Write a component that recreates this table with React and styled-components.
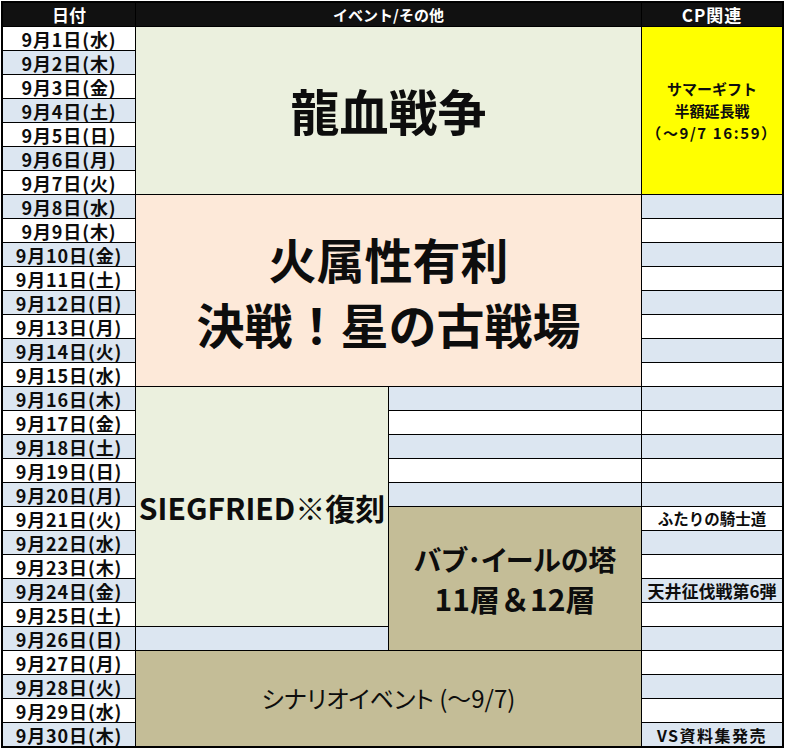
import styled, { createGlobalStyle } from "styled-components"

const GlobalStyle = createGlobalStyle`
    body {
        margin: 0;
        background: #fff;
        font-family: "Noto Sans CJK JP", "Noto Sans", sans-serif;
    }
`;

const WEEK = ["水", "木", "金", "土", "日", "月", "火"];
const days = Array.from({ length: 30 }, (_, i) => ({
    day: i + 1,
    label: `9月${i + 1}日(${WEEK[i % 7]})`,
}));

const rowOf = (day) => day + 1;
const shade = (day) => (day % 2 === 0 ? "#dce6f1" : "#ffffff");

// text in the CP column, with the size each one was squeezed to
const cpNotes = {
    21: { text: "ふたりの騎士道", size: 15.5, ls: 0 },
    24: { text: "天井征伐戦第6弾", size: 17, ls: 0 },
    30: { text: "VS資料集発売", size: 16, ls: 1.5 },
};

const App = () => {
    return <>
        <GlobalStyle />
        <Sheet>
            <Head $col="1">日付</Head>
            <Head $col="2 / 4" $size={15}>イベント/その他</Head>
            <Head $col="4" $ls={1}>CP関連</Head>

            {days.map(d => (
                <DateCell key={d.day} $row={rowOf(d.day)} $bg={shade(d.day)}>{d.label}</DateCell>
            ))}

            <Event $row={`${rowOf(1)} / span 7`} $col="2 / 4" $bg="#ebf0de">
                <Line $size={49}>龍血戦争</Line>
            </Event>
            <CpCell $row={`${rowOf(1)} / span 7`} $bg="#ffff00">
                <CpLine>サマーギフト</CpLine>
                <CpLine>半額延長戦</CpLine>
                <CpLine $ls={1.6}>（～9/7 16:59）</CpLine>
            </CpCell>

            <Event $row={`${rowOf(8)} / span 8`} $col="2 / 4" $bg="#fde9d9">
                <Line $size={48} $lh={65}>火属性有利</Line>
                <Line $size={48} $lh={65}>決戦！星の古戦場</Line>
            </Event>

            <Event $row={`${rowOf(16)} / span 10`} $col="2" $bg="#ebf0de">
                <Line $size={30}>SIEGFRIED※復刻</Line>
            </Event>
            {[16, 17, 18, 19, 20].map(d => (
                <Blank key={d} $row={rowOf(d)} $col="3" $bg={shade(d)} />
            ))}
            <Event $row={`${rowOf(21)} / span 6`} $col="3" $bg="#c4bd97">
                <Line $size={28} $lh={39} $palt>バブ･イールの塔</Line>
                <Line $size={30} $lh={39}>11層＆12層</Line>
            </Event>
            <Blank $row={rowOf(26)} $col="2" $bg={shade(26)} />

            <Event $row={`${rowOf(27)} / span 4`} $col="2 / 4" $bg="#c4bd97">
                <Line $size={24} $light $palt>シナリオイベント (～9/7)</Line>
            </Event>

            {days.filter(d => d.day >= 8).map(d => {
                const note = cpNotes[d.day];
                return <CpCell key={d.day} $row={rowOf(d.day)} $bg={shade(d.day)}
                    $size={note?.size} $ls={note?.ls}>{note?.text}</CpCell>
            })}
        </Sheet>
    </>
};

const Sheet = styled.div`
    display: grid;
    grid-template-columns: 132px 252px 252px 140px;
    grid-template-rows: repeat(31, 23px);
    gap: 1px;
    width: max-content;
    margin: 1px;
    background: #000;
    border: 2px solid #000;
    color: #0d0d0d;
`;

const Head = styled.div`
    grid-row: 1;
    grid-column: ${p => p.$col};
    display: flex;
    align-items: center;
    justify-content: center;
    background: #111;
    color: #fff;
    font-weight: 700;
    font-size: ${p => p.$size || 17}px;
    letter-spacing: ${p => p.$ls || 0}px;
`;

const DateCell = styled.div`
    grid-row: ${p => p.$row};
    grid-column: 1;
    display: flex;
    align-items: center;
    justify-content: center;
    background: ${p => p.$bg};
    font-weight: 700;
    font-size: 18px;
    letter-spacing: 0.9px;
`;

const Blank = styled.div`
    grid-row: ${p => p.$row};
    grid-column: ${p => p.$col};
    background: ${p => p.$bg};
`;

const Event = styled.div`
    grid-row: ${p => p.$row};
    grid-column: ${p => p.$col};
    display: flex;
    flex-direction: column;
    align-items: center;
    justify-content: center;
    background: ${p => p.$bg};
`;

const Line = styled.div`
    font-size: ${p => p.$size}px;
    line-height: ${p => p.$lh ? `${p.$lh}px` : "1.2"};
    font-weight: ${p => p.$light ? 400 : 700};
    font-feature-settings: ${p => p.$palt ? '"palt"' : "normal"};
    white-space: nowrap;
`;

const CpCell = styled.div`
    grid-row: ${p => p.$row};
    grid-column: 4;
    display: flex;
    flex-direction: column;
    align-items: center;
    justify-content: center;
    background: ${p => p.$bg};
    font-weight: 700;
    font-size: ${p => p.$size || 15}px;
    line-height: 1;
    letter-spacing: ${p => p.$ls || 0}px;
    white-space: nowrap;
`;

const CpLine = styled.div`
    line-height: 22px;
    letter-spacing: ${p => p.$ls || 0}px;
`;

export default App;
